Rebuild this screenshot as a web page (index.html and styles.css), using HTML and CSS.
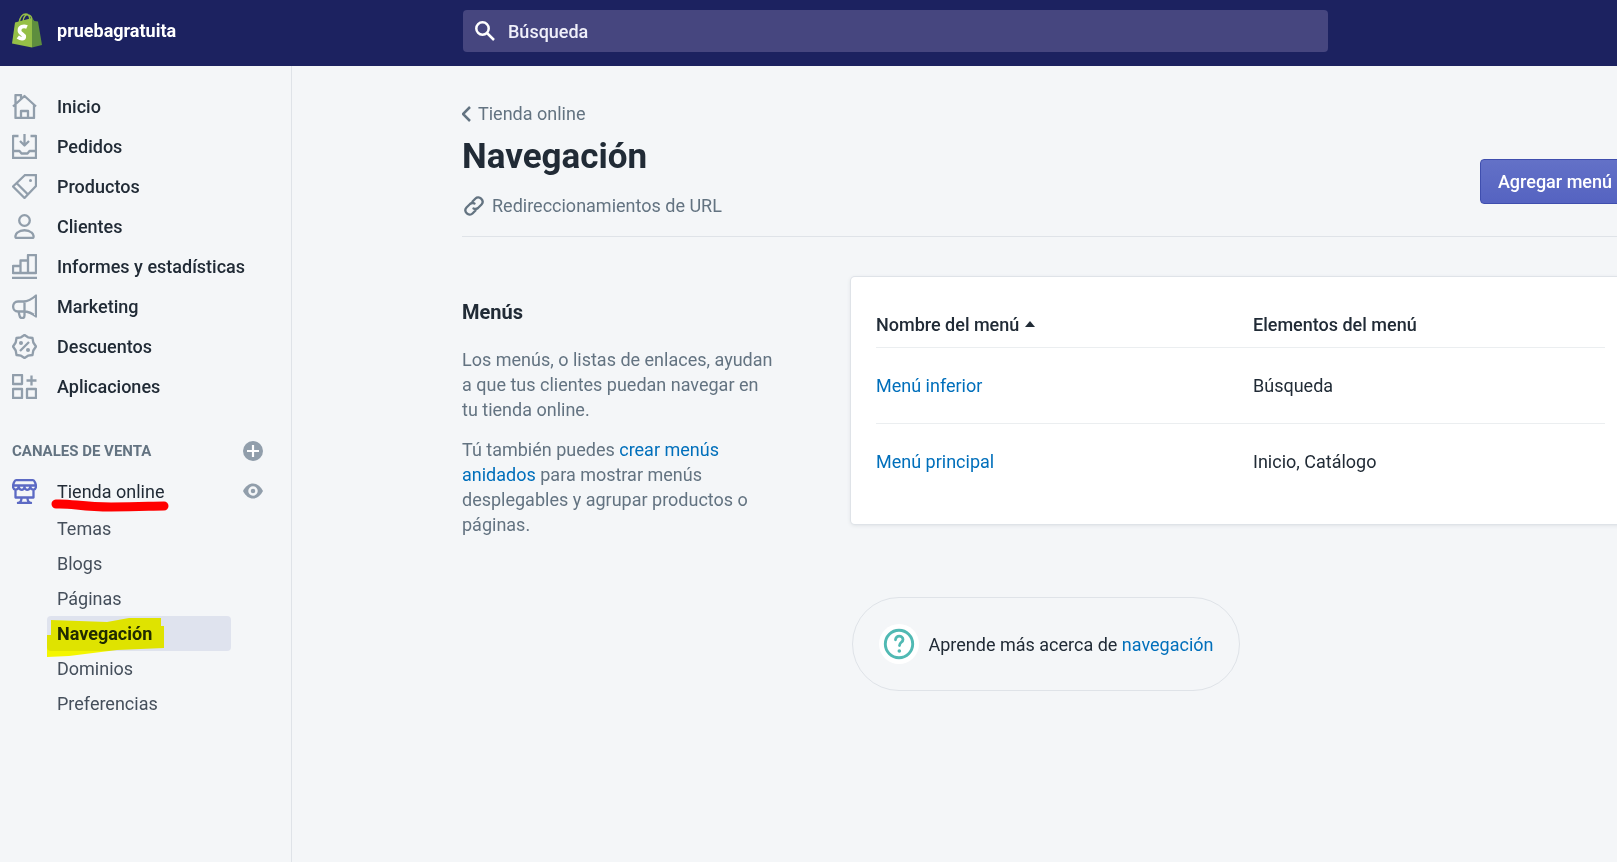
FILE: index.html
```html
<!DOCTYPE html>
<html lang="es">
<head>
<meta charset="utf-8">
<title>Navegación</title>
<link rel="stylesheet" href="styles.css">
</head>
<body>
<header class="topbar">
  <a class="brand" href="#">
    <svg class="brand-logo" viewBox="0 0 30 35" aria-hidden="true">
      <path d="M7 10C8 4 11 1 14 1c3 0 4 3 4 8M11 9c0-5 3-8 5-7 3 0 4 3 4 6" fill="none" stroke="#95bf47" stroke-width="1.4"/>
      <path d="M3 9.500L20 5 20 34.500 0 30.500z" fill="#95bf47"/>
      <path d="M20 5L22.500 8l3.500.5L30 32l-10 2.500z" fill="#5e8e3e"/>
      <path d="M15 14c-3.800-1.700-7.500.1-7.500 3.400 0 3.600 4.700 3.700 4.700 6.300 0 2.500-3.500 2.500-6.400.3" fill="none" stroke="#fff" stroke-width="3.800"/>
    </svg>
    <span>pruebagratuita</span>
  </a>
  <label class="search">
    <svg class="search-icon" viewBox="0 0 20 20" aria-hidden="true"><circle cx="7.500" cy="7.500" r="6.200"/><path d="M12 12l7 7"/></svg>
    <input type="search" placeholder="Búsqueda" aria-label="Búsqueda">
  </label>
</header>
<div class="frame">
  <nav class="sidebar">
    <ul class="nav-list">
      <li><a class="nav-item" href="#"><svg class="icon" viewBox="0 0 25 25"><path d="M1 12.500L12.500 2 24 12.500M3.500 11V1H9v4M3.500 11v13h18.500V11M9 24v-7h7v7"/></svg>Inicio</a></li>
      <li><a class="nav-item" href="#"><svg class="icon" viewBox="0 0 25 25"><path d="M6.500 2H1v22h23V2h-5.500M12.500 0v11M8 7l4.500 4.500L17 7M1 17h6.500l2 2.500h6l2-2.500H24"/></svg>Pedidos</a></li>
      <li><a class="nav-item" href="#"><svg class="icon" viewBox="0 0 25 25"><path d="M13 1h11v11L12.500 24 1 12.500zM4.500 9L16 20.500"/><circle class="solid" cx="18.500" cy="6.500" r="1.500"/></svg>Productos</a></li>
      <li><a class="nav-item" href="#"><svg class="icon" viewBox="0 0 25 25"><circle cx="12.500" cy="6.500" r="5.300"/><path d="M4.500 24C2.500 24 3.500 20 5.500 18.500 9 15.500 16 15.500 19.500 18.500 21.500 20 22.500 24 20.500 24z"/></svg>Clientes</a></li>
      <li><a class="nav-item" href="#"><svg class="icon" viewBox="0 0 25 25"><path d="M1 19V12h7.500v7V6.500H16V19V1h8v18zM0 24h25"/></svg>Informes y estadísticas</a></li>
      <li><a class="nav-item" href="#"><svg class="icon" viewBox="0 0 25 25"><path d="M24 1.500v21c-4-3.500-8-5-12.500-5H6C-.5 17.500-.5 7.500 6 7.500h5.500C16 7.500 20 5 24 1.500zM12.500 7.500v14c0 3.500-4.500 3.500-5 0l-1-4"/></svg>Marketing</a></li>
      <li><a class="nav-item" href="#"><svg class="icon" viewBox="0 0 25 25"><path d="M12.500 1l3.500 2.300 4.500.7.800 4.500 2.700 4-2.700 4-.8 4.500-4.500.7-3.500 2.300L9 21.700 4.500 21l-.8-4.500L1 12.500l2.700-4L4.500 4 9 3.300zM8 17l9-9"/><circle class="solid" cx="9" cy="9" r="2"/><circle class="solid" cx="16" cy="16" r="2"/></svg>Descuentos</a></li>
      <li><a class="nav-item" href="#"><svg class="icon" viewBox="0 0 25 25"><path d="M1 1h9v9H1zM1 15h9v9H1zM15 15h9v9h-9zM19.500 1.500v10M14.500 6.500h10"/></svg>Aplicaciones</a></li>
    </ul>
    <div class="section-head">
      <h2>CANALES DE VENTA</h2>
      <button class="icon-button" type="button" aria-label="Agregar canal"><svg viewBox="0 0 20 20"><circle cx="10" cy="10" r="10" fill="#919eab"/><path d="M10 4v12M4 10h12" stroke="#fff" stroke-width="2.200"/></svg></button>
    </div>
    <div class="channel">
      <a class="nav-item" href="#"><svg class="icon icon-store" viewBox="0 0 25 25"><path d="M4 1.200h17c1.500 0 3 4.300 3 6 0 4.300-4.500 4.300-5.700 1-1.500 3.500-4.800 3.500-5.800 0-1 3.500-4.300 3.500-5.800 0C5.500 11.500 1 11.500 1 7.200c0-1.700 1.500-6 3-6zM1.500 6.500h22M3.500 10v8.500h18V10M9.500 19c0 2.500-1 4.500-3.500 5h13c-2.500-.5-3.500-2.500-3.500-5"/></svg>Tienda online</a>
      <button class="icon-button" type="button" aria-label="Ver tienda online"><svg viewBox="0 0 20 20"><path d="M0 10c5-10 15-10 20 0-5 10-15 10-20 0z" fill="#919eab"/><circle cx="10" cy="10" r="3.500" fill="#919eab" stroke="#f4f6f8" stroke-width="2.500"/></svg></button>
      <svg class="underline-mark" viewBox="0 0 120 14"><path d="M5 5C20 4 30 8 60 8S100 7 113 7" fill="none" stroke="#f00" stroke-width="9" stroke-linecap="round"/></svg>
    </div>
    <ul class="sub-list">
      <li><a class="sub-item" href="#">Temas</a></li>
      <li><a class="sub-item" href="#">Blogs</a></li>
      <li><a class="sub-item" href="#">Páginas</a></li>
      <li><a class="sub-item active" href="#" aria-current="page">Navegación<svg class="highlight-mark" viewBox="0 0 118 40"><path d="M4 2L60 4 82 0H114V8H117V30L70 32 22 38 0 39V17H4z" fill="#ff0"/></svg></a></li>
      <li><a class="sub-item" href="#">Dominios</a></li>
      <li><a class="sub-item" href="#">Preferencias</a></li>
    </ul>
  </nav>
  <main class="main">
    <div class="page">
      <div class="page-head">
        <div>
          <a class="breadcrumb" href="#"><svg viewBox="0 0 10 16"><path d="M8 1L1 8l7 7"/></svg>Tienda online</a>
          <h1>Navegación</h1>
          <a class="redirects" href="#"><svg viewBox="0 0 20 20"><path d="M8.500 5.500L11.500 2.500c3.500-3.500 9.500 2 6 6L14 12c-1.500 1.200-3 1.300-4.500.5M11.500 14.500l-3 3c-3.500 3.500-9.500-2-6-6L6 8c1.500-1.200 3-1.300 4.500-.5"/></svg>Redireccionamientos de URL</a>
        </div>
        <button class="primary" type="button">Agregar menú</button>
      </div>
      <section class="annotated">
        <div class="annotation">
          <h2>Menús</h2>
          <p>Los menús, o listas de enlaces, ayudan a que tus clientes puedan navegar en tu tienda online.</p>
          <p>Tú también puedes <a href="#">crear menús anidados</a> para mostrar menús desplegables y agrupar productos o páginas.</p>
        </div>
        <div class="card">
          <table>
            <thead><tr><th scope="col" aria-sort="ascending"><span class="sort">Nombre del menú<svg class="caret" viewBox="0 0 10 6"><path d="M0 6L5 0l5 6z"/></svg></span></th><th scope="col">Elementos del menú</th></tr></thead>
            <tbody>
              <tr><td><a href="#">Menú inferior</a></td><td>Búsqueda</td></tr>
              <tr><td><a href="#">Menú principal</a></td><td>Inicio, Catálogo</td></tr>
            </tbody>
          </table>
        </div>
      </section>
      <div class="help">
        <svg class="help-icon" viewBox="0 0 40 40"><circle cx="20" cy="20" r="20" fill="#fff"/><circle cx="20" cy="20" r="13.700" fill="none" stroke="#50b9b3" stroke-width="2.900"/><path d="M16.500 15.800c0-5 7.500-4.500 7.500-.3 0 3-3.500 2.500-3.500 6" fill="none" stroke="#50b9b3" stroke-width="2.800" stroke-linecap="round"/><circle cx="20.300" cy="27" r="1.800" fill="#50b9b3"/></svg>
        <span>Aprende más acerca de <a href="#">navegación</a></span>
      </div>
    </div>
  </main>
</div>
</body>
</html>
```
FILE: styles.css
```css
* { box-sizing: border-box; }
body {
  margin: 0;
  min-height: 100vh;
  display: flex;
  flex-direction: column;
  overflow: hidden;
  background: #f4f6f8;
  color: #212b36;
  font: 400 18px/25px Roboto, "Liberation Sans", sans-serif;
}
h1, h2, p, ul { margin: 0; padding: 0; }
ul { list-style: none; }
a { color: #006fbb; text-decoration: none; }
button { font: inherit; cursor: pointer; }
svg { flex: none; display: block; }

.topbar {
  height: 66px;
  display: flex;
  align-items: flex-start;
  background: #1c2260;
}
.brand {
  width: 463px;
  padding: 13px 0 0 12px;
  display: flex;
  gap: 15px;
  color: #fff;
  font-weight: 700;
  line-height: 35px;
}
.brand-logo { width: 30px; height: 35px; }
.search {
  width: 865px;
  height: 42px;
  margin-top: 10px;
  padding: 0 12px;
  display: flex;
  align-items: center;
  gap: 13px;
  border-radius: 4px;
  background: #46467f;
}
.search-icon { width: 20px; height: 20px; fill: none; stroke: #fff; stroke-width: 2.5; }
.search input {
  flex: 1;
  border: 0;
  padding: 0;
  outline: 0;
  background: none;
  color: #fff;
  font: inherit;
  font-weight: 500;
}
.search input::placeholder { color: #f0f0fa; opacity: 1; }

.frame { flex: 1; display: flex; }
.sidebar {
  width: 292px;
  flex: none;
  padding-top: 20px;
  border-right: 1px solid #dfe3e8;
}
.nav-item {
  height: 40px;
  padding-left: 12px;
  display: flex;
  align-items: center;
  gap: 20px;
  color: #212b36;
  font-weight: 500;
}
.icon { width: 25px; height: 25px; fill: none; stroke: #919eab; stroke-width: 2.3; stroke-linejoin: round; }
.icon .solid { fill: #919eab; stroke: none; }
.icon-store { stroke: #5c6ac4; }
.section-head {
  height: 40px;
  margin-top: 25px;
  padding: 0 28px 0 12px;
  display: flex;
  align-items: center;
  justify-content: space-between;
}
.section-head h2 { color: #637381; font-size: 15px; font-weight: 700; }
.icon-button { width: 20px; height: 20px; padding: 0; border: 0; background: none; }
.icon-button svg { width: 20px; height: 20px; }
.channel {
  position: relative;
  padding-right: 28px;
  display: flex;
  align-items: center;
  justify-content: space-between;
}
.channel .nav-item { font-weight: 400; }
.underline-mark { position: absolute; left: 51px; top: 28px; width: 120px; height: 14px; }
.sub-list { padding: 0 60px 0 47px; }
.sub-item {
  position: relative;
  display: block;
  padding: 5px 10px;
  border-radius: 4px;
  color: #454f5b;
}
.sub-item.active { background: #dfe3ee; color: #212b36; font-weight: 700; }
.highlight-mark { position: absolute; left: 0; top: 2px; width: 118px; height: 40px; mix-blend-mode: multiply; }

.main { flex: 1; min-width: 0; padding: 35px 0 0 170px; }
.page { margin-right: -13px; }
.page-head {
  padding-bottom: 18px;
  display: flex;
  align-items: flex-start;
  justify-content: space-between;
  border-bottom: 1px solid #dfe3e8;
}
.breadcrumb, .redirects { display: flex; align-items: center; color: #637381; }
.breadcrumb { gap: 6px; }
.breadcrumb svg { width: 10px; height: 16px; fill: none; stroke: #637381; stroke-width: 2.5; }
h1 { margin: 8px 0 14px; font-size: 35px; line-height: 45px; font-weight: 700; }
.redirects { gap: 8px; padding-left: 2px; }
.redirects svg { width: 20px; height: 20px; fill: none; stroke: #637381; stroke-width: 2.3; stroke-linecap: round; }
.primary {
  height: 45px;
  margin-top: 58px;
  padding: 0 17px;
  border: 1px solid #3f4eae;
  border-radius: 4px;
  background: linear-gradient(#6371c7, #5563c1);
  color: #fff;
  font-weight: 500;
}
.annotated { margin-top: 40px; display: flex; gap: 76px; }
.annotation { width: 313px; flex: none; padding-top: 23px; color: #637381; }
.annotation h2 { margin-bottom: 22px; color: #212b36; font-size: 20px; font-weight: 700; }
.annotation p + p { margin-top: 15px; }
.card {
  flex: 1;
  padding: 25px;
  align-self: flex-start;
  border-radius: 4px;
  background: #fff;
  box-shadow: 0 0 0 1px #dfe3e8, 0 1px 4px #d5d9de;
}
table { width: 100%; border-collapse: collapse; table-layout: fixed; }
th, td { padding: 0; text-align: left; }
th { height: 45px; font-weight: 500; border-bottom: 1px solid #ebeef0; }
th:first-child { width: 377px; }
td { height: 76px; }
tr + tr td { border-top: 1px solid #ebeef0; }
.sort { display: flex; align-items: center; gap: 6px; }
.caret { width: 10px; height: 6px; fill: #212b36; }
.help {
  width: fit-content;
  margin: 60px auto 0;
  padding: 26px;
  display: flex;
  align-items: center;
  gap: 10px;
  border: 1px solid #dfe3e8;
  border-radius: 48px;
}
.help-icon { width: 40px; height: 40px; }
```
